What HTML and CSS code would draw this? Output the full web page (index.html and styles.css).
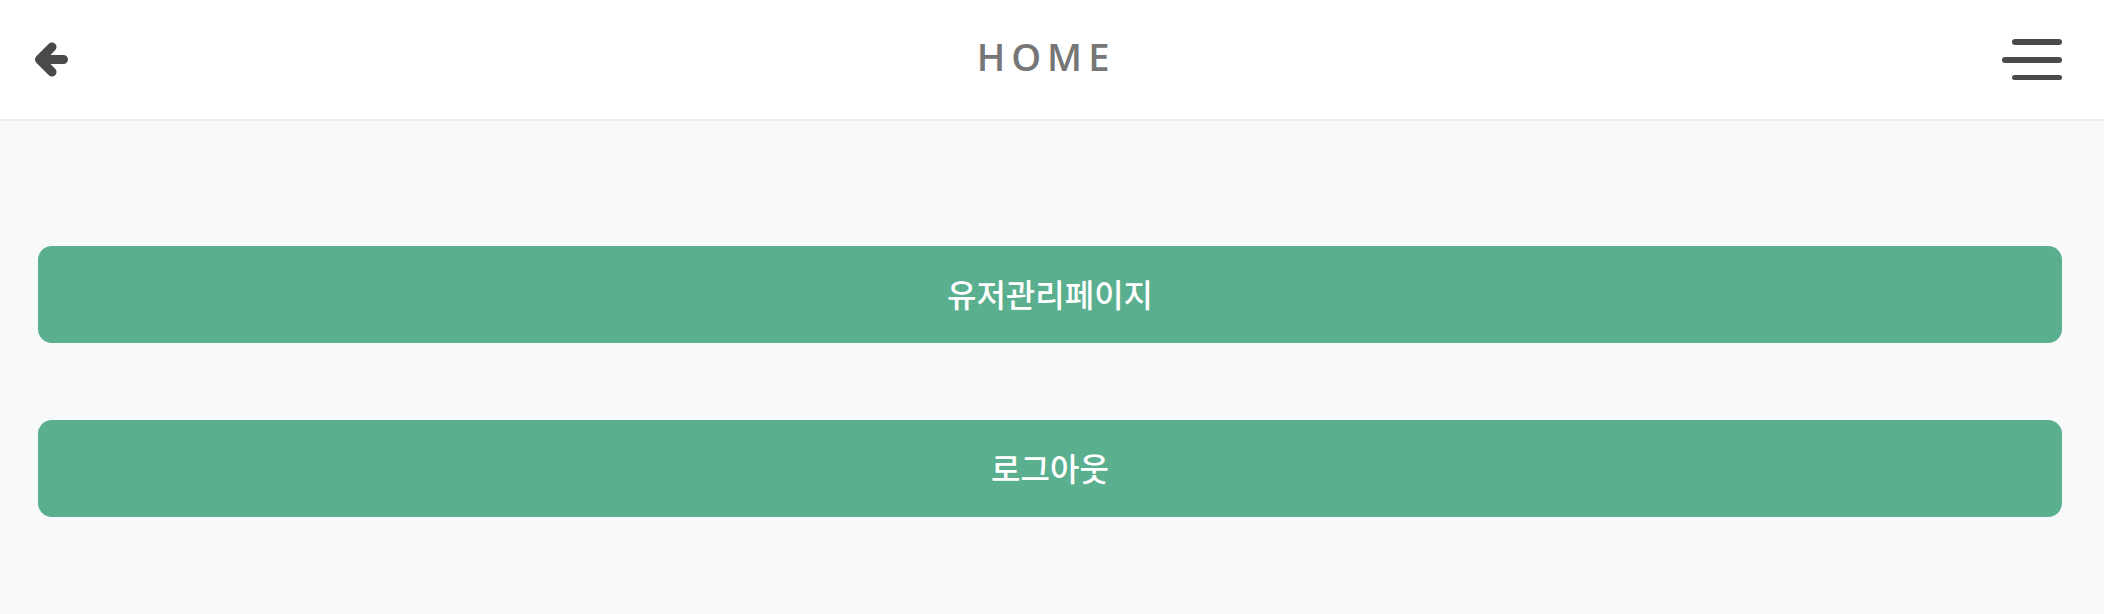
FILE: index.html
```html
<!DOCTYPE html>
<html lang="ko">
<head>
<meta charset="utf-8">
<title>HOME</title>
<link rel="stylesheet" href="styles.css">
</head>
<body>
<header class="topbar">
  <button class="icon-btn back" aria-label="back">
    <svg width="46" height="46" viewBox="0 0 46 46">
      <path d="M9.5 22.5 L22 10 M9.5 22.5 L22 35 M9.5 22.5 L33.5 22.5" fill="none" stroke="#4a4a4a" stroke-width="9" stroke-linecap="round" stroke-linejoin="round"/>
    </svg>
  </button>
  <h1 class="title">HOME</h1>
  <button class="icon-btn menu" aria-label="menu">
    <span class="bar short"></span>
    <span class="bar long"></span>
    <span class="bar short thin"></span>
  </button>
</header>
<main class="content">
  <button class="action">유저관리페이지</button>
  <button class="action">로그아웃</button>
</main>
</body>
</html>
```
FILE: styles.css
```css
html, body {
  margin: 0;
  padding: 0;
}
body {
  background: #f8f9fb;
  font-family: "Noto Sans", "Noto Sans CJK KR", sans-serif;
  height: 614px;
  overflow: hidden;
}
.topbar {
  height: 119px;
  background: #ffffff;
  border-bottom: 2px solid #ededed;
  display: flex;
  align-items: center;
  justify-content: space-between;
  padding: 0 42px 0 30px;
}
.icon-btn {
  background: none;
  border: 0;
  padding: 0;
  cursor: pointer;
}
.back {
  width: 46px;
  height: 46px;
}
.back svg {
  display: block;
}
.title {
  margin: 0 0 8px 14px;
  font-family: "Open Sans", "Noto Sans", sans-serif;
  font-weight: 600;
  font-size: 38px;
  letter-spacing: 6px;
  color: #767676;
  line-height: 1;
}
.menu {
  display: flex;
  flex-direction: column;
  align-items: flex-end;
  gap: 12px;
  width: 60px;
}
.bar {
  display: block;
  height: 6px;
  width: 60px;
  border-radius: 3px;
  background: #4a4a4a;
}
.bar.short {
  width: 50px;
}
.bar.thin {
  height: 5px;
}
.content {
  display: flex;
  flex-direction: column;
  gap: 77px;
  padding: 125px 42px 0 38px;
}
.action {
  height: 97px;
  padding: 0 0 4px;
  border: 0;
  border-radius: 14px;
  background: #5aaf8f;
  color: #ffffff;
  font-family: "Noto Sans CJK KR", sans-serif;
  font-size: 32px;
  font-weight: 500;
  cursor: pointer;
}
```
